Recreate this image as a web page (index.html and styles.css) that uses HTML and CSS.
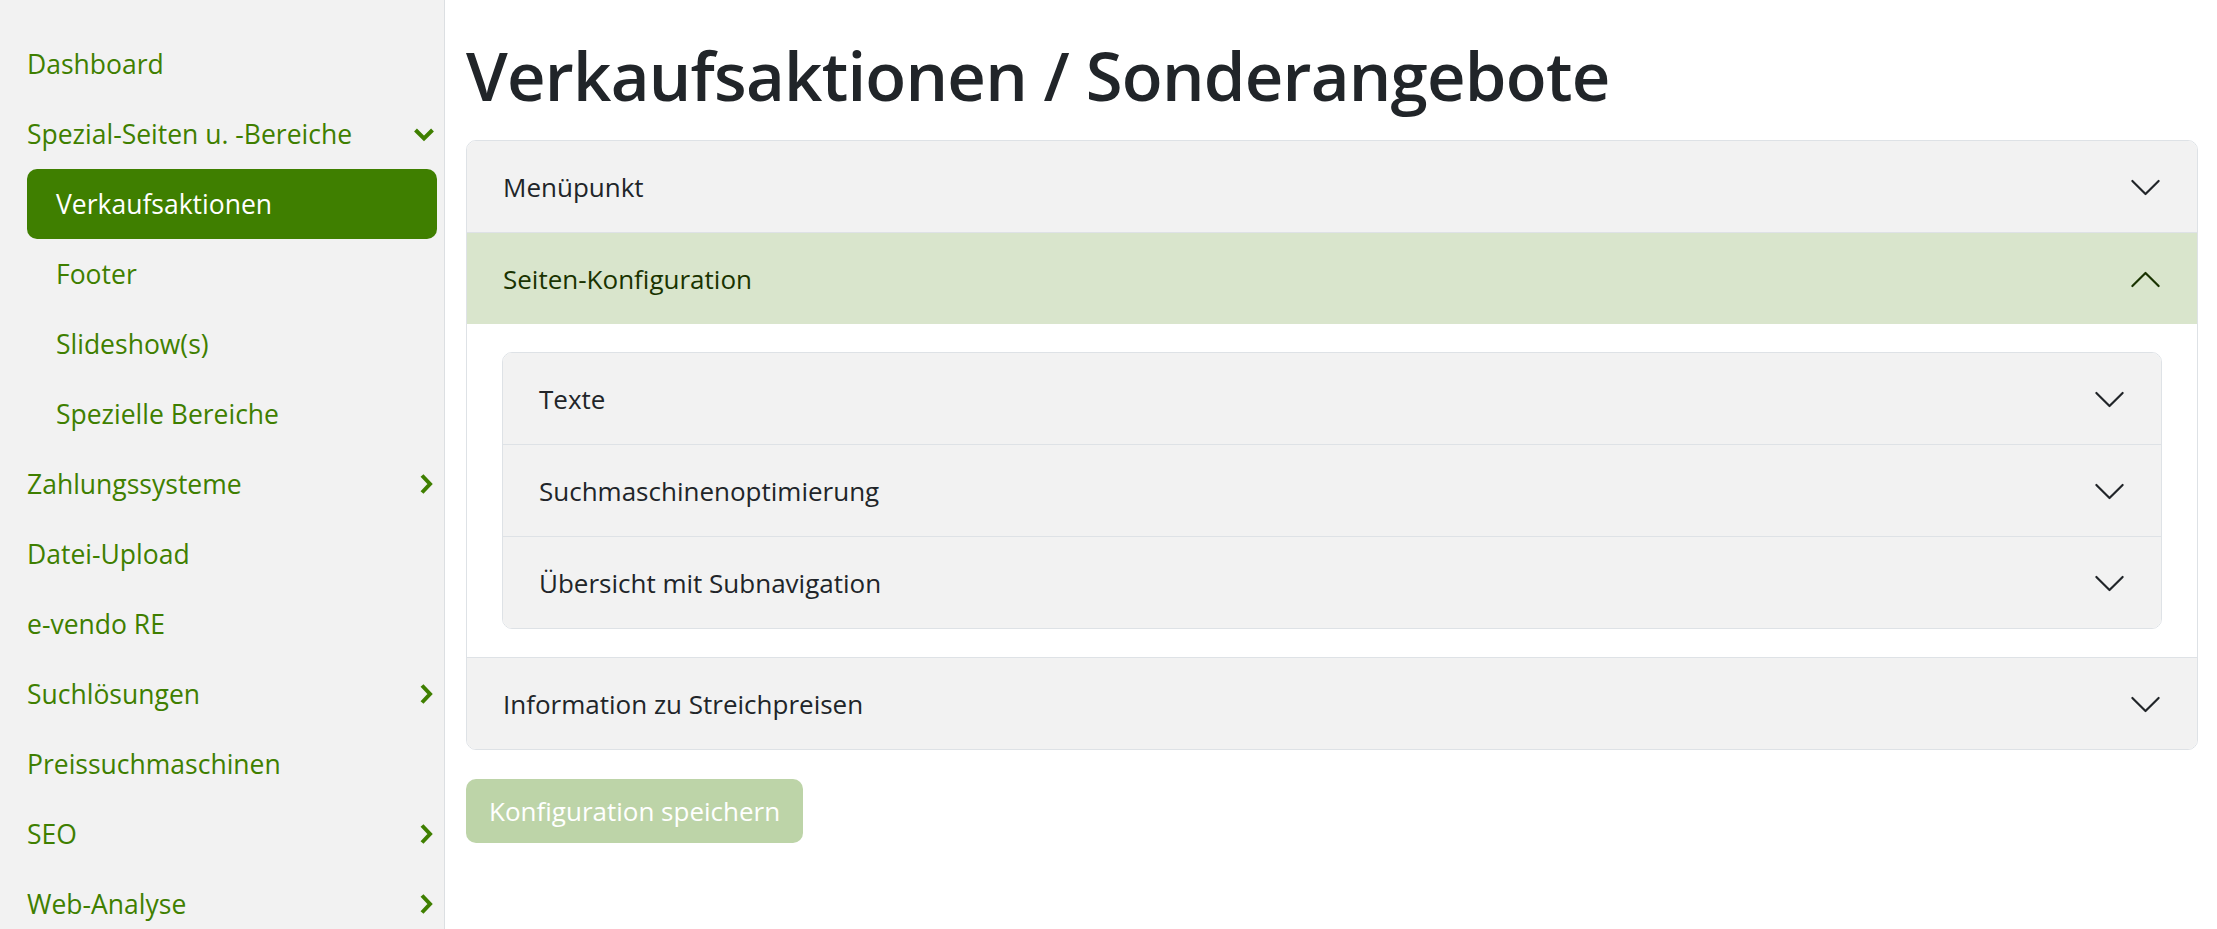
FILE: index.html
```html
<!DOCTYPE html>
<html lang="de">
<head>
  <meta charset="utf-8">
  <title>Verkaufsaktionen / Sonderangebote</title>
  <link rel="stylesheet" href="styles.css">
</head>
<body>
  <div class="layout">
    <aside class="sidebar">
      <ul class="nav">
        <li><a class="nav-link" href="#">Dashboard</a></li>
        <li>
          <a class="nav-link" href="#">
            <span>Spezial-Seiten u. -Bereiche</span>
            <svg class="nav-icon" viewBox="0 0 24 24"><path d="M3.5 8L12 16.5L20.5 8"/></svg>
          </a>
          <ul class="nav subnav">
            <li><a class="nav-link active" href="#">Verkaufsaktionen</a></li>
            <li><a class="nav-link" href="#">Footer</a></li>
            <li><a class="nav-link" href="#">Slideshow(s)</a></li>
            <li><a class="nav-link" href="#">Spezielle Bereiche</a></li>
          </ul>
        </li>
        <li>
          <a class="nav-link" href="#">
            <span>Zahlungssysteme</span>
            <svg class="nav-icon" viewBox="0 0 24 24"><path d="M10 3.5L18 12L10 20.5"/></svg>
          </a>
        </li>
        <li><a class="nav-link" href="#">Datei-Upload</a></li>
        <li><a class="nav-link" href="#">e-vendo RE</a></li>
        <li>
          <a class="nav-link" href="#">
            <span>Suchlösungen</span>
            <svg class="nav-icon" viewBox="0 0 24 24"><path d="M10 3.5L18 12L10 20.5"/></svg>
          </a>
        </li>
        <li><a class="nav-link" href="#">Preissuchmaschinen</a></li>
        <li>
          <a class="nav-link" href="#">
            <span>SEO</span>
            <svg class="nav-icon" viewBox="0 0 24 24"><path d="M10 3.5L18 12L10 20.5"/></svg>
          </a>
        </li>
        <li>
          <a class="nav-link" href="#">
            <span>Web-Analyse</span>
            <svg class="nav-icon" viewBox="0 0 24 24"><path d="M10 3.5L18 12L10 20.5"/></svg>
          </a>
        </li>
      </ul>
    </aside>

    <main class="content">
      <h1 class="page-title">Verkaufsaktionen / Sonderangebote</h1>

      <div class="accordion">
        <div class="accordion-item">
          <button type="button" class="accordion-button collapsed">
            <span>Menüpunkt</span>
            <svg class="acc-icon" viewBox="0 0 16 16"><path d="M2 5L8 11L14 5"/></svg>
          </button>
        </div>
        <div class="accordion-item">
          <button type="button" class="accordion-button">
            <span>Seiten-Konfiguration</span>
            <svg class="acc-icon" viewBox="0 0 16 16"><path d="M2 11L8 5L14 11"/></svg>
          </button>
          <div class="accordion-body">
            <div class="accordion">
              <div class="accordion-item">
                <button type="button" class="accordion-button collapsed">
                  <span>Texte</span>
                  <svg class="acc-icon" viewBox="0 0 16 16"><path d="M2 5L8 11L14 5"/></svg>
                </button>
              </div>
              <div class="accordion-item">
                <button type="button" class="accordion-button collapsed">
                  <span>Suchmaschinenoptimierung</span>
                  <svg class="acc-icon" viewBox="0 0 16 16"><path d="M2 5L8 11L14 5"/></svg>
                </button>
              </div>
              <div class="accordion-item">
                <button type="button" class="accordion-button collapsed">
                  <span>Übersicht mit Subnavigation</span>
                  <svg class="acc-icon" viewBox="0 0 16 16"><path d="M2 5L8 11L14 5"/></svg>
                </button>
              </div>
            </div>
          </div>
        </div>
        <div class="accordion-item">
          <button type="button" class="accordion-button collapsed">
            <span>Information zu Streichpreisen</span>
            <svg class="acc-icon" viewBox="0 0 16 16"><path d="M2 5L8 11L14 5"/></svg>
          </button>
        </div>
      </div>

      <button type="button" class="btn-save" disabled>Konfiguration speichern</button>
    </main>
  </div>
</body>
</html>
```

FILE: styles.css
```css
:root {
  --primary: #3f7f00;
  --primary-subtle: #d9e5cc;
  --primary-emphasis: #193300;
  --text: #212529;
  --border: #dee2e6;
  --bg-grey: #f2f2f2;
}

* {
  box-sizing: border-box;
}

body {
  margin: 0;
  font-family: "Open Sans", "Noto Sans", "DejaVu Sans", sans-serif;
  font-size: 26px;
  line-height: 39px;
  color: var(--text);
  background: #fff;
}

.layout {
  display: flex;
  min-height: 100vh;
}

/* Sidebar */
.sidebar {
  width: 445px;
  flex-shrink: 0;
  padding: 29px 7px 0 27px;
  background: var(--bg-grey);
  border-right: 1px solid #dcdfe2;
}

.nav {
  list-style: none;
  margin: 0;
  padding: 0;
}

.nav-link {
  display: flex;
  align-items: center;
  justify-content: space-between;
  height: 70px;
  padding-right: 1px;
  color: var(--primary);
  font-size: 26.5px;
  text-decoration: none;
}

.subnav .nav-link {
  padding-left: 29px;
}

.nav-link.active {
  background: var(--primary);
  color: #fff;
  border-radius: 10px;
}

.nav-icon {
  width: 24px;
  height: 24px;
  fill: none;
  stroke: var(--primary);
  stroke-width: 4;
  stroke-linejoin: miter;
}

/* Content */
.content {
  flex: 1;
  padding: 0 19px 0 21px;
}

.page-title {
  margin: 35px 0 25px;
  font-size: 67px;
  font-weight: 600;
  line-height: 80px;
  letter-spacing: -0.75px;
}

.accordion {
  border: 1px solid var(--border);
  border-radius: 10px;
  overflow: hidden;
}

.accordion-item + .accordion-item {
  border-top: 1px solid var(--border);
}

.accordion-button {
  display: flex;
  align-items: center;
  justify-content: space-between;
  width: 100%;
  height: 91px;
  padding: 2px 36px 0;
  border: none;
  background: var(--bg-grey);
  color: var(--text);
  font: inherit;
  text-align: left;
  cursor: pointer;
}

.accordion-button:not(.collapsed) {
  background: var(--primary-subtle);
  color: var(--primary-emphasis);
}

.acc-icon {
  width: 35px;
  height: 35px;
  margin-right: -2px;
  fill: none;
  stroke: var(--text);
  stroke-width: 1;
  stroke-linecap: round;
  stroke-linejoin: round;
}

.accordion-button:not(.collapsed) .acc-icon {
  stroke: var(--primary-emphasis);
}

.accordion-body {
  padding: 28px 35px 28px 35px;
  background: #fff;
}

.btn-save {
  margin-top: 29px;
  height: 64px;
  padding: 0 23px;
  border: none;
  border-radius: 10px;
  background: #bdd4a8;
  color: #fff;
  font: inherit;
}
```
